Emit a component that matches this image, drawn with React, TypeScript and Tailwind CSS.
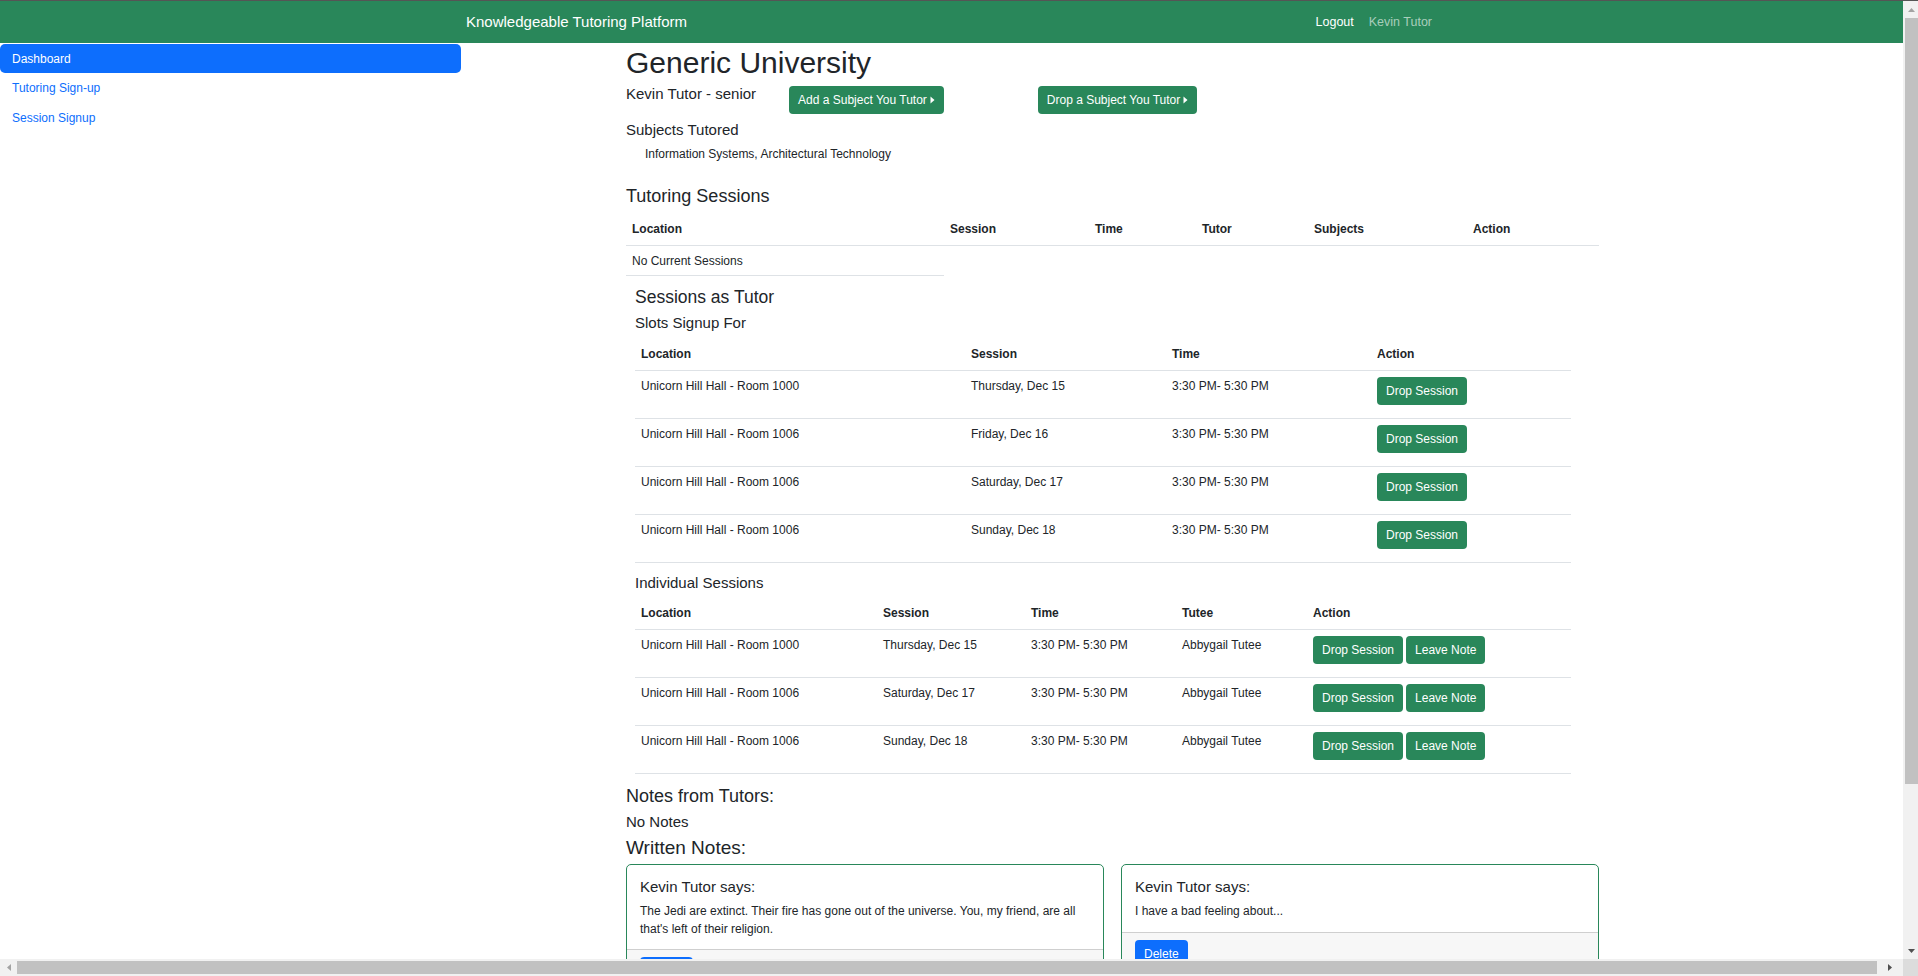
import React from "react"

// data for the tables
const slots = [
  { location: "Unicorn Hill Hall - Room 1000", session: "Thursday, Dec 15", time: "3:30 PM- 5:30 PM" },
  { location: "Unicorn Hill Hall - Room 1006", session: "Friday, Dec 16", time: "3:30 PM- 5:30 PM" },
  { location: "Unicorn Hill Hall - Room 1006", session: "Saturday, Dec 17", time: "3:30 PM- 5:30 PM" },
  { location: "Unicorn Hill Hall - Room 1006", session: "Sunday, Dec 18", time: "3:30 PM- 5:30 PM" },
]

const individual = [
  { location: "Unicorn Hill Hall - Room 1000", session: "Thursday, Dec 15", time: "3:30 PM- 5:30 PM", tutee: "Abbygail Tutee" },
  { location: "Unicorn Hill Hall - Room 1006", session: "Saturday, Dec 17", time: "3:30 PM- 5:30 PM", tutee: "Abbygail Tutee" },
  { location: "Unicorn Hill Hall - Room 1006", session: "Sunday, Dec 18", time: "3:30 PM- 5:30 PM", tutee: "Abbygail Tutee" },
]

const Caret = () => (
  <svg width="5" height="8" viewBox="0 0 5 8" className="ml-[3px]">
    <path d="M0.5 0.5 L4.5 4 L0.5 7.5 Z" fill="white" />
  </svg>
)

const GreenButton = ({ children }: { children: React.ReactNode }) => (
  <button className="h-[28px] px-[9px] rounded-[4px] bg-[#29875a] text-white text-[12px] leading-[18px] flex items-center">
    {children}
  </button>
)

const Arrow = ({ dir, color }: { dir: "up" | "down" | "left" | "right"; color: string }) => {
  const d = {
    up: "M0 4 L3.5 0 L7 4 Z",
    down: "M0 0 L7 0 L3.5 4 Z",
    left: "M4 0 L4 7 L0 3.5 Z",
    right: "M0 0 L4 3.5 L0 7 Z",
  }[dir]
  const vert = dir === "up" || dir === "down"
  return (
    <svg width={vert ? 7 : 4} height={vert ? 4 : 7} viewBox={vert ? "0 0 7 4" : "0 0 4 7"}>
      <path d={d} fill={color} />
    </svg>
  )
}

const Navbar = () => (
  <div className="h-[42px] bg-[#29875a] shrink-0">
    <div className="w-[985px] mx-auto h-full flex items-center justify-between">
      <span className="pl-[7px] text-[15px] text-white">Knowledgeable Tutoring Platform</span>
      <div className="flex items-center gap-[15px] pr-[12px] text-[12.5px]">
        <span className="text-white">Logout</span>
        <span className="text-white/60">Kevin Tutor</span>
      </div>
    </div>
  </div>
)

const Sidebar = () => (
  <div className="w-[461px] shrink-0 pt-[1px] text-[12px]">
    <div className="h-[29px] rounded-[5px] bg-[#0d6efd] text-white flex items-center pl-[12px]">Dashboard</div>
    <div className="h-[30px] text-[#0d6efd] flex items-center pl-[12px]">Tutoring Sign-up</div>
    <div className="h-[30px] text-[#0d6efd] flex items-center pl-[12px]">Session Signup</div>
  </div>
)

const HeadCell = ({ w, children }: { w: string; children: React.ReactNode }) => (
  <div className={`${w} px-[6px] font-bold`}>{children}</div>
)

const App = () => {
  return (
    <div className="h-[976px] w-[1918px] overflow-hidden flex flex-col bg-white text-[#212529] font-['Liberation_Sans',Arial,sans-serif]">
      <div className="h-px bg-[#555555] shrink-0" />
      <div className="flex flex-1 min-h-0">
        <div className="flex-1 overflow-hidden">
          <Navbar />
          <div className="flex">
            <Sidebar />
            <div className="ml-[165px] w-[973px] text-[12px] leading-[18px]">
              <h1 className="pt-[2px] text-[30px] leading-[36px] font-medium">Generic University</h1>

              <div className="flex items-start">
                <div className="mt-[4px] text-[15px] leading-[18px]">Kevin Tutor - senior</div>
                <div className="mt-[5px] ml-[33px]">
                  <GreenButton>
                    Add a Subject You Tutor <Caret />
                  </GreenButton>
                </div>
                <div className="mt-[5px] ml-[94px]">
                  <GreenButton>
                    Drop a Subject You Tutor <Caret />
                  </GreenButton>
                </div>
              </div>

              <div className="mt-[7px] text-[15px] leading-[18px]">Subjects Tutored</div>
              <div className="mt-[6px] pl-[19px]">Information Systems, Architectural Technology</div>

              <h4 className="mt-[22px] text-[18px] leading-[22px]">Tutoring Sessions</h4>

              {/* tutoring sessions table */}
              <div className="mt-[6px]">
                <div className="flex py-[7px] border-b border-[#dee2e6]">
                  <HeadCell w="w-[318px]">Location</HeadCell>
                  <HeadCell w="w-[145px]">Session</HeadCell>
                  <HeadCell w="w-[107px]">Time</HeadCell>
                  <HeadCell w="w-[112px]">Tutor</HeadCell>
                  <HeadCell w="w-[159px]">Subjects</HeadCell>
                  <HeadCell w="w-[132px]">Action</HeadCell>
                </div>
                <div className="w-[318px] px-[6px] pt-[6px] pb-[5px] border-b border-[#dee2e6]">No Current Sessions</div>
              </div>

              <div className="ml-[9px] w-[936px]">
                <h4 className="mt-[11px] text-[17.5px] leading-[21px]">Sessions as Tutor</h4>
                <h5 className="mt-[6px] text-[15px] leading-[18px]">Slots Signup For</h5>

                <div className="mt-[6px]">
                  <div className="flex py-[7px] border-b border-[#dee2e6]">
                    <HeadCell w="w-[330px]">Location</HeadCell>
                    <HeadCell w="w-[201px]">Session</HeadCell>
                    <HeadCell w="w-[205px]">Time</HeadCell>
                    <HeadCell w="w-[200px]">Action</HeadCell>
                  </div>
                  {slots.map((s, i) => (
                    <div key={i} className="flex h-[48px] border-b border-[#dee2e6]">
                      <div className="w-[330px] px-[6px] pt-[6px]">{s.location}</div>
                      <div className="w-[201px] px-[6px] pt-[6px]">{s.session}</div>
                      <div className="w-[205px] px-[6px] pt-[6px]">{s.time}</div>
                      <div className="w-[200px] px-[6px] pt-[6px]">
                        <GreenButton>Drop Session</GreenButton>
                      </div>
                    </div>
                  ))}
                </div>

                <h5 className="mt-[11px] text-[15px] leading-[18px]">Individual Sessions</h5>

                <div className="mt-[5px]">
                  <div className="flex py-[7px] border-b border-[#dee2e6]">
                    <HeadCell w="w-[242px]">Location</HeadCell>
                    <HeadCell w="w-[148px]">Session</HeadCell>
                    <HeadCell w="w-[151px]">Time</HeadCell>
                    <HeadCell w="w-[131px]">Tutee</HeadCell>
                    <HeadCell w="w-[264px]">Action</HeadCell>
                  </div>
                  {individual.map((s, i) => (
                    <div key={i} className="flex h-[48px] border-b border-[#dee2e6]">
                      <div className="w-[242px] px-[6px] pt-[6px]">{s.location}</div>
                      <div className="w-[148px] px-[6px] pt-[6px]">{s.session}</div>
                      <div className="w-[151px] px-[6px] pt-[6px]">{s.time}</div>
                      <div className="w-[131px] px-[6px] pt-[6px]">{s.tutee}</div>
                      <div className="w-[264px] px-[6px] pt-[6px] flex gap-[3px] items-start">
                        <GreenButton>Drop Session</GreenButton>
                        <GreenButton>Leave Note</GreenButton>
                      </div>
                    </div>
                  ))}
                </div>
              </div>

              <h4 className="mt-[11px] text-[18px] leading-[22px]">Notes from Tutors:</h4>
              <div className="mt-[6px] text-[15px] leading-[18px]">No Notes</div>
              <h4 className="mt-[5px] text-[19px] leading-[23px]">Written Notes:</h4>

              {/* written note cards */}
              <div className="mt-[5px] grid grid-cols-2 gap-[17px] items-start">
                <div className="border border-[#29875a] rounded-[5px] overflow-hidden">
                  <div className="px-[13px] pt-[13px] pb-[11px]">
                    <div className="text-[15px] leading-[18px]">Kevin Tutor says:</div>
                    <p className="mt-[7px] leading-[17.5px]">
                      The Jedi are extinct. Their fire has gone out of the universe. You, my friend, are all that's left of their religion.
                    </p>
                  </div>
                  <div className="bg-[#f7f7f7] border-t border-[#cfcfcf] px-[13px] pt-[7px] pb-[7px]">
                    <button className="h-[28px] px-[9px] rounded-[4px] bg-[#0d6efd] text-white text-[12px]">Delete</button>
                  </div>
                </div>
                <div className="border border-[#29875a] rounded-[5px] overflow-hidden">
                  <div className="px-[13px] pt-[13px] pb-[11px]">
                    <div className="text-[15px] leading-[18px]">Kevin Tutor says:</div>
                    <p className="mt-[7px] leading-[17.5px]">I have a bad feeling about...</p>
                  </div>
                  <div className="bg-[#f7f7f7] border-t border-[#cfcfcf] px-[13px] pt-[7px] pb-[7px]">
                    <button className="h-[28px] px-[9px] rounded-[4px] bg-[#0d6efd] text-white text-[12px]">Delete</button>
                  </div>
                </div>
              </div>
              <div className="h-[200px]" />
            </div>
          </div>
        </div>

        {/* vertical scrollbar */}
        <div className="w-[15px] shrink-0 bg-[#f1f1f1] flex flex-col">
          <div className="h-[17px] flex items-center justify-center pl-[2px]">
            <Arrow dir="up" color="#a3a3a3" />
          </div>
          <div className="ml-[2px] h-[766px] bg-[#c1c1c1]" />
          <div className="flex-1" />
          <div className="h-[17px] flex items-center justify-center pl-[2px]">
            <Arrow dir="down" color="#505050" />
          </div>
        </div>
      </div>

      {/* horizontal scrollbar */}
      <div className="h-[17px] shrink-0 flex">
        <div className="flex-1 bg-[#f1f1f1] flex items-center">
          <div className="w-[17px] flex justify-center">
            <Arrow dir="left" color="#a3a3a3" />
          </div>
          <div className="w-[1860px] h-[13px] bg-[#c1c1c1]" />
          <div className="flex-1 flex justify-center">
            <Arrow dir="right" color="#505050" />
          </div>
        </div>
        <div className="w-[15px] bg-[#dcdcdc]" />
      </div>
    </div>
  )
}

export default App
